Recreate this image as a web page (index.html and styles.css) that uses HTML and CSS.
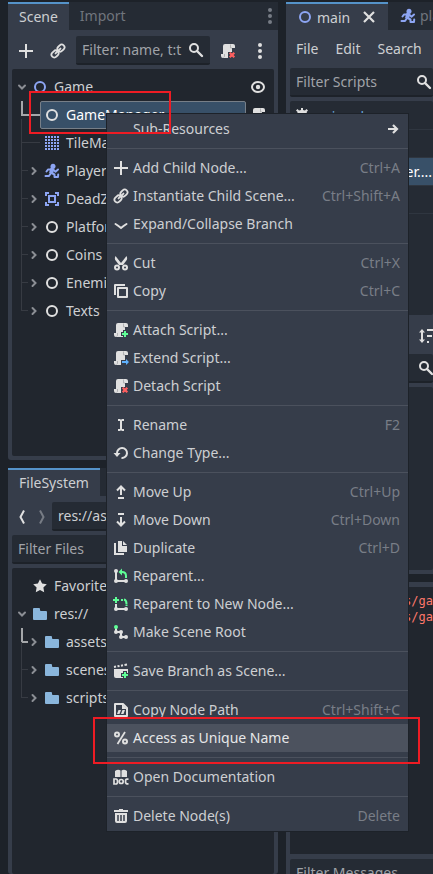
FILE: index.html
```html
<!DOCTYPE html>
<html lang="en">
<head>
<meta charset="utf-8">
<title>Scene editor</title>
<link rel="stylesheet" href="styles.css">
</head>
<body>
<svg class="defs" aria-hidden="true">
  <symbol id="plus" viewBox="0 0 16 16"><path d="M7 1h2v6h6v2H9v6H7V9H1V7h6z"/></symbol>
  <symbol id="link" viewBox="0 0 16 16"><g fill="none" stroke="currentColor" stroke-width="1.800" transform="rotate(-45 8 8)"><rect x="0" y="5.200" width="7.600" height="5.600" rx="2.800"/><rect x="8.400" y="5.200" width="7.600" height="5.600" rx="2.800"/><path d="M4.500 8h7" stroke-linecap="round"/></g></symbol>
  <symbol id="search" viewBox="0 0 16 16"><circle cx="6" cy="6" r="4" fill="none" stroke="currentColor" stroke-width="2"/><path d="M9 9l5 5" stroke="currentColor" stroke-width="2.4" stroke-linecap="round"/></symbol>
  <symbol id="script" viewBox="0 0 16 16"><path d="M5 1a2 2 0 0 0-2 2v8H1v2a2 2 0 0 0 2 2h7a2 2 0 0 0 2-2V5h3V3a2 2 0 0 0-2-2z"/><path d="M4.500 11v2q0 1-1 1.500M10.500 1.500V5H12" fill="none" stroke="#b0b1b3" stroke-width="1"/></symbol>
  <symbol id="script-plus" viewBox="0 0 16 16"><use href="#script" width="16" height="16"/><path d="M8 10h2V8h4v2h2v4h-2v2h-4v-2H8z" fill="#363d4a"/><path d="M11 9h2v2h2v2h-2v2h-2v-2H9v-2h2z" fill="#5fff97"/></symbol>
  <symbol id="script-ext" viewBox="0 0 16 16"><use href="#script" width="16" height="16"/><path d="M8 10h8v5H8z" fill="#363d4a"/><path d="M9 11h4V9l3 3-3 3v-2H9z" fill="#5fb2ff"/></symbol>
  <symbol id="script-x" viewBox="0 0 16 16"><use href="#script" width="16" height="16"/><path d="M8 9h8v7H8z" fill="#363d4a"/><path d="M9.700 9.700l4.600 4.600m0-4.600l-4.600 4.600" stroke="#ff5f5f" stroke-width="2.200"/></symbol>
  <symbol id="dots" viewBox="0 0 16 16"><circle cx="8" cy="2" r="2"/><circle cx="8" cy="8" r="2"/><circle cx="8" cy="14" r="2"/></symbol>
  <symbol id="node" viewBox="0 0 16 16"><circle cx="8" cy="8" r="5" fill="none" stroke="currentColor" stroke-width="2"/></symbol>
  <symbol id="eye" viewBox="0 0 16 16"><ellipse cx="8" cy="8" rx="6" ry="5" fill="none" stroke="currentColor" stroke-width="2"/><circle cx="8" cy="8" r="2.2"/></symbol>
  <symbol id="down" viewBox="0 0 16 16"><path d="M5 6.500l3 3 3-3" fill="none" stroke="currentColor" stroke-width="2" stroke-linecap="round"/></symbol>
  <symbol id="right" viewBox="0 0 16 16"><path d="M6.500 5l3 3-3 3" fill="none" stroke="currentColor" stroke-width="2" stroke-linecap="round"/></symbol>
  <symbol id="grid" viewBox="0 0 16 16"><path d="M2 1v14M5 1v14M8 1v14M11 1v14M14 1v14" stroke="currentColor" stroke-width="2" stroke-dasharray="2 1"/></symbol>
  <symbol id="runner" viewBox="0 0 16 16"><circle cx="9" cy="3.300" r="2.500"/><path d="M8.500 5L7 10.500" stroke="currentColor" stroke-width="4"/><path d="M8 6.500H4L2.500 8.500M9 6.500l2.500 2.200L14 6.500M7 10l-2 3H1.500M7.500 10l3 1.500V14H14l.2-2.500" fill="none" stroke="currentColor" stroke-width="2" stroke-linecap="round" stroke-linejoin="round"/></symbol>
  <symbol id="area" viewBox="0 0 16 16"><path d="M5 2H2v3M11 2h3v3M2 11v3h3M14 11v3h-3M5 5h6v6H5z" fill="none" stroke="currentColor" stroke-width="2"/></symbol>
  <symbol id="folder" viewBox="0 0 16 16"><path d="M1 3a1 1 0 0 1 1-1h5a1 1 0 0 1 1 1v1a1 1 0 0 0 1 1h5a1 1 0 0 1 1 1v7a1 1 0 0 1-1 1H2a1 1 0 0 1-1-1z"/></symbol>
  <symbol id="star" viewBox="0 0 16 16"><path d="M8 1.200l2.100 4.300 4.700.7-3.400 3.400.8 4.700L8 12.100l-4.200 2.200.8-4.700L1.200 6.200l4.700-.7z"/></symbol>
  <symbol id="back" viewBox="0 0 16 16"><path d="M10 1.500L6.500 8l3.500 6.500" fill="none" stroke="currentColor" stroke-width="2"/></symbol>
  <symbol id="forward" viewBox="0 0 16 16"><path d="M6 1.500L9.500 8 6 14.500" fill="none" stroke="currentColor" stroke-width="2"/></symbol>
  <symbol id="close" viewBox="0 0 16 16"><path d="M3 3l10 10M13 3L3 13" stroke="currentColor" stroke-width="2.2"/></symbol>
  <symbol id="gear" viewBox="0 0 16 16"><path d="M7 1h2v2l2 .6L12.500 2 14 3.500 12.600 5l.7 2H15v2h-2l-.6 2 1.600 1.500-1.500 1.500L11 12.500 9 13v2H7v-2l-2-.5L3.500 14 2 12.500 3.500 11 3 9H1V7h2l.6-2L2 3.500 3.500 2 5 3.500 7 3z"/></symbol>
  <symbol id="sort" viewBox="0 0 16 16"><path d="M4 1l3 3.500H5v7h2L4 15l-3-3.500h2v-7H1zM9 1h7v2H9zM9 7h5v2H9zM9 13h2v2H9z"/></symbol>
  <symbol id="arrow" viewBox="0 0 16 16"><path d="M3 8h8M8 4l4 4-4 4" fill="none" stroke="currentColor" stroke-width="2.200"/></symbol>
  <symbol id="expand" viewBox="0 0 16 16"><path d="M2.500 8Q5 9.500 8 12q3-2.500 5.500-4" fill="none" stroke="currentColor" stroke-width="2" stroke-linecap="round"/></symbol>
  <symbol id="cut" viewBox="0 0 16 16"><path d="M2.500 1Q1 4 3 6l3 4h4l3-4q2-2 .5-5L8 8z"/><circle cx="4" cy="12.500" r="2" fill="none" stroke="currentColor" stroke-width="2"/><circle cx="12" cy="12.500" r="2" fill="none" stroke="currentColor" stroke-width="2"/></symbol>
  <symbol id="copy" viewBox="0 0 16 16"><path d="M2 12V2h10M5 5h9v9H5z" fill="none" stroke="currentColor" stroke-width="2" stroke-linejoin="round"/></symbol>
  <symbol id="rename" viewBox="0 0 16 16"><path d="M5 2h2l1 .7L9 2h2v2H9v8h2v2H9l-1-.7-1 .7H5v-2h2V4H5z"/></symbol>
  <symbol id="reload" viewBox="0 0 16 16"><path d="M4 9V8a5 5 0 1 1 4.500 5" fill="none" stroke="currentColor" stroke-width="2"/><path d="M.5 8h7L4 12z"/></symbol>
  <symbol id="up-arrow" viewBox="0 0 16 16"><path d="M8 11V2M4 6.500l4-4 4 4M5 14h6" fill="none" stroke="currentColor" stroke-width="2"/></symbol>
  <symbol id="down-arrow" viewBox="0 0 16 16"><path d="M8 5v9M4 9.500l4 4 4-4M5 2h6" fill="none" stroke="currentColor" stroke-width="2"/></symbol>
  <symbol id="duplicate" viewBox="0 0 16 16"><path d="M5 1h4v5h5v6H5zM10 1l4 4h-4z"/><path d="M2 3v11h9" fill="none" stroke="currentColor" stroke-width="2"/></symbol>
  <symbol id="reparent" viewBox="0 0 16 16"><path d="M3 3v10h10" fill="none" stroke="currentColor" stroke-width="2"/><circle cx="3" cy="3" r="2"/><circle cx="3" cy="13" r="2"/><circle cx="13" cy="13" r="2"/><path d="M9 4q4 0 4 4v2" fill="none" stroke="#5fff97" stroke-width="2"/><path d="M5.500 4L9 .5v7z" fill="#5fff97"/></symbol>
  <symbol id="reparent-new" viewBox="0 0 16 16"><path d="M3 8v5h10" fill="none" stroke="currentColor" stroke-width="2"/><circle cx="3" cy="13" r="2"/><circle cx="13" cy="13" r="2"/><path d="M8 4h2M11 3.500q2.500.5 2.500 4.500M13.500 8.500V10" fill="none" stroke="#5fff97" stroke-width="2"/><path d="M2 1h2v2h2v2H4v2H2V5H0V3h2z" fill="#5fff97"/></symbol>
  <symbol id="root" viewBox="0 0 16 16"><path d="M3 4v4h5v5h5" fill="none" stroke="currentColor" stroke-width="2"/><circle cx="3" cy="8" r="2"/><circle cx="8" cy="8" r="2"/><circle cx="8" cy="13" r="2"/><circle cx="13" cy="13" r="2"/><circle cx="3" cy="3" r="2" fill="#5fff97"/></symbol>
  <symbol id="save-branch" viewBox="0 0 16 16"><path d="M1 6h14v7q0 2-2 2H3q-2 0-2-2z"/><path d="M1 4l2-.4M4.500 3.300l2-.4M8 2.700l2-.4M11.500 2l2.500-.5" stroke="currentColor" stroke-width="2"/><path d="M8 10h2V8h4v2h2v6H10v-2H8z" fill="#363d4a"/><path d="M11 9h2v2h2v2h-2v2h-2v-2H9v-2h2z" fill="#5fff97"/></symbol>
  <symbol id="copy-path" viewBox="0 0 16 16"><path d="M2 2h8l4 4v8H2z" fill="none" stroke="currentColor" stroke-width="2" stroke-linejoin="round"/><path d="M9 2v5h5zM4 12l1.500-4H8l-1.500 4zM8 12l1.500-4H12l-1.500 4z"/></symbol>
  <symbol id="percent" viewBox="0 0 16 16"><circle cx="4" cy="4.500" r="2" fill="none" stroke="currentColor" stroke-width="2"/><circle cx="12" cy="11.500" r="2" fill="none" stroke="currentColor" stroke-width="2"/><path d="M12 2L4.500 14" stroke="currentColor" stroke-width="1.800"/></symbol>
  <symbol id="doc" viewBox="0 0 16 16"><path d="M2 2q3-2 5.500-.5V8H2zM8.500 1.500Q11 0 14 2v6H8.500z"/><path d="M1 10h2q1.500 0 1.500 2.500T3 15H1zM15.500 10.200H14q-1.500 0-1.500 2.300t1.500 2.300h1.500" fill="none" stroke="currentColor" stroke-width="1.700"/><circle cx="8.200" cy="12.500" r="2" fill="none" stroke="currentColor" stroke-width="1.700"/></symbol>
  <symbol id="trash" viewBox="0 0 16 16"><path d="M6 1h4v1h5v2H1V2h5zM2 5h12v8q0 2-2 2H4q-2 0-2-2z"/><path d="M5 7v6M8 7v6M11 7v6" stroke="#363d4a" stroke-width="1.500"/></symbol>
</svg>

<div class="editor">
  <div class="left">
    <section class="dock scene-dock">
      <div class="tabs"><span class="tab active">Scene</span><span class="tab">Import</span><svg class="icon tab-dots"><use href="#dots"/></svg></div>
      <div class="panel">
        <div class="toolbar">
          <svg class="icon"><use href="#plus"/></svg>
          <svg class="icon"><use href="#link"/></svg>
          <div class="input"><span>Filter: name, t:t</span><svg class="icon"><use href="#search"/></svg></div>
          <svg class="icon"><use href="#script-x"/></svg>
          <svg class="icon"><use href="#dots"/></svg>
        </div>
        <div class="tree">
          <div class="row"><svg class="icon chevron"><use href="#down"/></svg><svg class="icon blue"><use href="#node"/></svg><span>Game</span><svg class="icon end"><use href="#eye"/></svg></div>
          <div class="row child first"><i class="guide strong"></i><div class="selected"><svg class="icon"><use href="#node"/></svg><span>GameManager</span></div><svg class="icon end"><use href="#script"/></svg></div>
          <div class="row child"><i class="guide long"></i><svg class="icon chevron"></svg><svg class="icon blue"><use href="#grid"/></svg><span>TileMap</span></div>
          <div class="row child"><i class="guide"></i><svg class="icon chevron"><use href="#right"/></svg><svg class="icon blue"><use href="#runner"/></svg><span>Player</span></div>
          <div class="row child"><i class="guide"></i><svg class="icon chevron"><use href="#right"/></svg><svg class="icon blue"><use href="#area"/></svg><span>DeadZone</span></div>
          <div class="row child"><i class="guide"></i><svg class="icon chevron"><use href="#right"/></svg><svg class="icon"><use href="#node"/></svg><span>Platforms</span></div>
          <div class="row child"><i class="guide"></i><svg class="icon chevron"><use href="#right"/></svg><svg class="icon"><use href="#node"/></svg><span>Coins</span></div>
          <div class="row child"><i class="guide"></i><svg class="icon chevron"><use href="#right"/></svg><svg class="icon"><use href="#node"/></svg><span>Enemies</span></div>
          <div class="row child"><i class="guide"></i><svg class="icon chevron"><use href="#right"/></svg><svg class="icon"><use href="#node"/></svg><span>Texts</span></div>
        </div>
      </div>
    </section>
    <section class="dock files-dock">
      <div class="tabs"><span class="tab active">FileSystem</span></div>
      <div class="panel">
        <div class="path-bar"><svg class="icon"><use href="#back"/></svg><svg class="icon muted"><use href="#forward"/></svg><div class="input bright"><span>res://assets</span></div></div>
        <div class="input file-filter"><span>Filter Files</span></div>
        <div class="tree">
          <div class="row"><svg class="icon chevron"></svg><svg class="icon"><use href="#star"/></svg><span>Favorites:</span></div>
          <div class="row"><svg class="icon chevron"><use href="#down"/></svg><svg class="icon sky"><use href="#folder"/></svg><span>res://</span></div>
          <div class="row child"><i class="guide strong short"></i><svg class="icon chevron"><use href="#right"/></svg><svg class="icon sky"><use href="#folder"/></svg><span>assets</span></div>
          <div class="row child"><i class="guide"></i><svg class="icon chevron"><use href="#right"/></svg><svg class="icon sky"><use href="#folder"/></svg><span>scenes</span></div>
          <div class="row child"><i class="guide"></i><svg class="icon chevron"><use href="#right"/></svg><svg class="icon sky"><use href="#folder"/></svg><span>scripts</span></div>
        </div>
      </div>
    </section>
  </div>

  <div class="main">
    <section class="dock script-dock">
      <div class="tabs"><span class="tab active doc-tab"><svg class="icon blue"><use href="#node"/></svg><span>main</span><svg class="icon"><use href="#close"/></svg></span><span class="tab doc-tab"><svg class="icon blue"><use href="#runner"/></svg><span>player</span></span></div>
      <div class="panel">
        <div class="menubar"><span>File</span><span>Edit</span><span>Search</span></div>
        <div class="input script-filter"><span>Filter Scripts</span><svg class="icon"><use href="#search"/></svg></div>
        <div class="list scripts">
          <div class="item"><svg class="icon"><use href="#gear"/></svg><span class="link-text">signal</span></div>
          <div class="item"></div>
          <div class="item current"><span>er....</span></div>
          <div class="item"></div>
        </div>
        <div class="sort-bar"><svg class="icon"><use href="#sort"/></svg></div>
        <div class="input method-filter"><svg class="icon"><use href="#search"/></svg></div>
        <div class="list methods"></div>
      </div>
    </section>
    <section class="output">
      <div class="log"><div>s/ga</div><div>s/ga</div></div>
      <div class="input message-filter"><span>Filter Messages</span></div>
    </section>
  </div>
</div>

<div class="menu">
  <div class="entry"><i class="icon"></i><span>Sub-Resources</span><svg class="icon sub"><use href="#arrow"/></svg></div>
  <hr>
  <div class="entry"><svg class="icon"><use href="#plus"/></svg><span>Add Child Node...</span><kbd>Ctrl+A</kbd></div>
  <div class="entry"><svg class="icon"><use href="#link"/></svg><span>Instantiate Child Scene...</span><kbd>Ctrl+Shift+A</kbd></div>
  <div class="entry"><svg class="icon"><use href="#expand"/></svg><span>Expand/Collapse Branch</span></div>
  <hr>
  <div class="entry"><svg class="icon"><use href="#cut"/></svg><span>Cut</span><kbd>Ctrl+X</kbd></div>
  <div class="entry"><svg class="icon"><use href="#copy"/></svg><span>Copy</span><kbd>Ctrl+C</kbd></div>
  <hr>
  <div class="entry"><svg class="icon"><use href="#script-plus"/></svg><span>Attach Script...</span></div>
  <div class="entry"><svg class="icon"><use href="#script-ext"/></svg><span>Extend Script...</span></div>
  <div class="entry"><svg class="icon"><use href="#script-x"/></svg><span>Detach Script</span></div>
  <hr>
  <div class="entry"><svg class="icon"><use href="#rename"/></svg><span>Rename</span><kbd>F2</kbd></div>
  <div class="entry"><svg class="icon"><use href="#reload"/></svg><span>Change Type...</span></div>
  <hr>
  <div class="entry"><svg class="icon"><use href="#up-arrow"/></svg><span>Move Up</span><kbd>Ctrl+Up</kbd></div>
  <div class="entry"><svg class="icon"><use href="#down-arrow"/></svg><span>Move Down</span><kbd>Ctrl+Down</kbd></div>
  <div class="entry"><svg class="icon"><use href="#duplicate"/></svg><span>Duplicate</span><kbd>Ctrl+D</kbd></div>
  <div class="entry"><svg class="icon"><use href="#reparent"/></svg><span>Reparent...</span></div>
  <div class="entry"><svg class="icon"><use href="#reparent-new"/></svg><span>Reparent to New Node...</span></div>
  <div class="entry"><svg class="icon"><use href="#root"/></svg><span>Make Scene Root</span></div>
  <hr>
  <div class="entry"><svg class="icon"><use href="#save-branch"/></svg><span>Save Branch as Scene...</span></div>
  <hr>
  <div class="entry"><svg class="icon"><use href="#copy-path"/></svg><span>Copy Node Path</span><kbd>Ctrl+Shift+C</kbd></div>
  <div class="entry hover"><svg class="icon"><use href="#percent"/></svg><span>Access as Unique Name</span></div>
  <hr>
  <div class="entry"><svg class="icon"><use href="#doc"/></svg><span>Open Documentation</span></div>
  <hr>
  <div class="entry"><svg class="icon"><use href="#trash"/></svg><span>Delete Node(s)</span><kbd>Delete</kbd></div>
</div>
<div class="mark mark-node"></div>
<div class="mark mark-entry"></div>
</body>
</html>
```
FILE: styles.css
```css
* { box-sizing: border-box; }
body {
  margin: 0;
  width: 433px;
  height: 874px;
  overflow: hidden;
  position: relative;
  background: #1d2229;
  color: #cdcfd2;
  font: 14px/28px "Noto Sans", "Open Sans", sans-serif;
  white-space: nowrap;
}
.defs { position: absolute; width: 0; height: 0; }
.icon { display: block; flex: none; width: 16px; height: 16px; color: #e0e0e0; fill: currentColor; }
.blue { color: #8da5f3; }
.sky { color: #8ab6dc; }
.muted { color: #777c85; }

.editor { display: flex; gap: 8px; height: 874px; padding: 2px 0 0 8px; }
.left { width: 270px; flex: none; display: flex; flex-direction: column; gap: 8px; }
.main { width: 147px; flex: none; display: flex; flex-direction: column; gap: 8px; overflow: hidden; }
.dock { display: flex; flex-direction: column; }
.scene-dock { height: 458px; }
.files-dock { flex: 1; }
.script-dock { height: 572px; }
.tabs { display: flex; align-items: center; height: 28px; flex: none; background: #252b34; }
.tab { height: 28px; padding: 0 11px; color: #70757d; }
.active { background: #363d4a; border-top: 2px solid #5593c9; color: #cdcfd2; line-height: 25px; }
.tab-dots { margin: 0 0 0 auto; color: #777c85; }
.panel { flex: 1; min-height: 0; display: flex; flex-direction: column; background: #363d4a; padding: 0 4px 4px; border-radius: 0 0 3px 3px; }
.toolbar { display: flex; align-items: center; height: 39px; padding: 2px 6px 0; flex: none; }
.toolbar > .icon:nth-child(2) { margin-left: 16px; }
.toolbar .input { width: 134px; margin: 0 10px; }
.toolbar > .icon:last-child { margin-left: 16px; }
.input { display: flex; align-items: center; justify-content: space-between; flex: none; height: 29px; padding: 0 6px; background: #252b34; border-bottom: 2px solid #1d2229; border-radius: 2px; color: #a0a3a8; line-height: 27px; overflow: hidden; }
.bright { color: #cdcfd2; }
.tree { flex: 1; background: #21262e; border-radius: 2px; padding-top: 4px; overflow: hidden; }
.row { position: relative; display: flex; align-items: center; height: 28px; padding-left: 2px; }
.row span { margin-left: 6px; }
.chevron { margin-right: 2px; color: #8b8e94; }
.child { padding-left: 14px; }
.end { margin: 0 8px 0 auto; }
.first { padding-left: 28px; }
.selected { display: flex; align-items: center; width: 206px; height: 28px; padding-left: 3px; border: 1px solid #777f88; border-radius: 2px; background: #385068; color: #fff; line-height: 26px; }
.guide { position: absolute; left: 9px; top: -14px; width: 7px; height: 28px; border: solid #373b43; border-width: 0 0 1px 1px; }
.strong { top: 0; height: 15px; width: 19px; border: solid #a5a7aa; border-width: 0 0 2px 2px; }
.short { width: 7px; }
.long { top: -10px; width: 19px; height: 24px; }

.files-dock .panel { padding-bottom: 0; }
.path-bar { display: flex; align-items: center; height: 39px; flex: none; padding: 2px 0 0 2px; }
.path-bar .muted { margin: 0 2px 0 4px; }
.path-bar .input { flex: 1; }
.file-filter { margin-bottom: 4px; }

.doc-tab { display: flex; align-items: center; flex: none; width: 102px; }
.doc-tab > span { margin: 0 auto 0 4px; }
.tab.doc-tab:last-child { padding-left: 12px; }
.menubar { display: flex; gap: 17px; height: 38px; padding-left: 6px; line-height: 38px; flex: none; }
.script-dock .panel, .output { width: 151px; }
.script-filter { margin-bottom: 4px; padding-right: 1px; }
.list { background: #252b34; overflow: hidden; border-radius: 2px; }
.scripts { height: 214px; flex: none; }
.item { display: flex; align-items: center; height: 28px; padding: 0 1px 0 4px; border-bottom: 1px solid #2f3640; }
.item:first-child { height: 29px; }
.link-text { color: #68a6dc; margin: 4px 0 0 15px; }
.current { background: #385068; color: #fff; justify-content: flex-end; }
.sort-bar { height: 39px; padding: 13px 0 0 128px; flex: none; }
.method-filter { padding-left: 128px; margin-bottom: 4px; }
.methods { flex: 1; }

.output { flex: 1; min-height: 0; display: flex; flex-direction: column; padding: 5px 0 0 4px; background: #363d4a; }
.log { height: 267px; flex: none; background: #21262e; padding: 6px 0 0 114px; margin-bottom: 5px; font: 12px/16px "DejaVu Sans Mono", monospace; color: #ff786b; }
.message-filter { border-radius: 2px 0 0; }

.menu { position: absolute; left: 106px; top: 113px; width: 303px; height: 719px; padding: 1px 0 0; border: 1px solid #1d2229; background: #363d4a; }
.entry { display: flex; align-items: center; height: 28px; gap: 4px; padding: 0 8px 0 6px; }
.hover { background: #4c525e; color: #e6e7e8; }
.menu hr { height: 1px; margin: 5px 0; border: 0; background: #4b515d; }
kbd { margin-left: auto; font: inherit; color: #797e87; }
.sub { margin: 0 -1px 0 auto; }
.mark { position: absolute; border: 2px solid #ee1c24; }
.mark-node { left: 29px; top: 91px; width: 142px; height: 43px; }
.mark-entry { left: 93px; top: 717px; width: 327px; height: 47px; }
```
